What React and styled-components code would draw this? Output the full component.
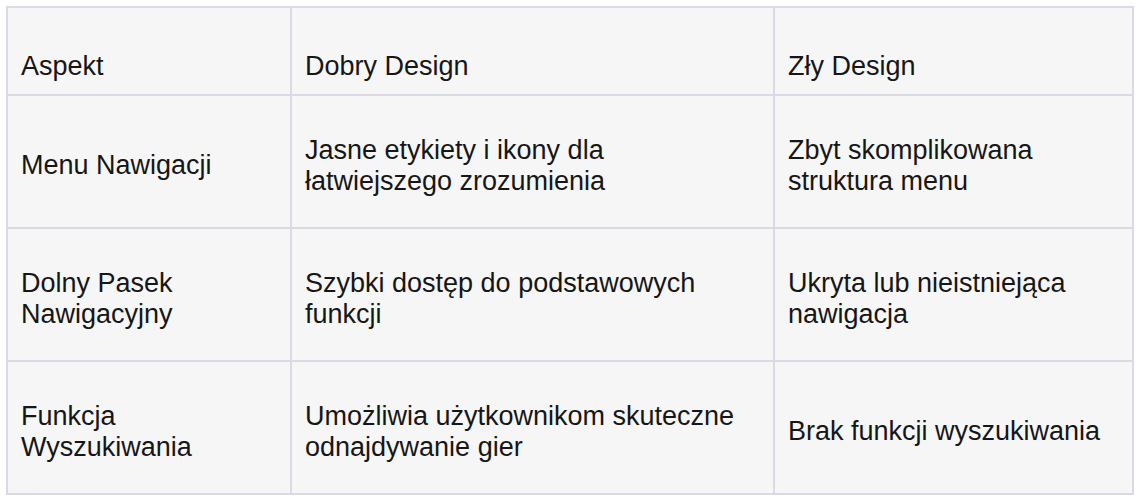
import React from "react";
import styled, { createGlobalStyle } from "styled-components";

const Global = createGlobalStyle`
  html, body { margin: 0; padding: 0; background: #ffffff; }
  body { font-family: "Liberation Sans", Arial, sans-serif; color: #161616; }
`;

const Page = styled.div`
  padding: 6px 0 0 6px;
`;

const Table = styled.table`
  width: 1128px;
  table-layout: fixed;
  border-collapse: separate;
  border-spacing: 0;
  border: 1px solid #dbd9e4;
  background: #f6f6f6;
  font-size: 27px;
  line-height: normal;
`;

const HeadRow = styled.tr`
  height: 88px;
`;

const BodyRow = styled.tr`
  height: 133px;
`;

const Th = styled.th`
  border: 1px solid #dbd9e4;
  padding: 12px 24px 12px 13px;
  text-align: left;
  font-weight: 400;
  vertical-align: bottom;
`;

const Td = styled.td`
  border: 1px solid #dbd9e4;
  padding: 16px 24px 8px 13px;
  text-align: left;
  vertical-align: middle;
`;

const rows = [
  ["Menu Nawigacji", "Jasne etykiety i ikony dla łatwiejszego zrozumienia", "Zbyt skomplikowana struktura menu"],
  ["Dolny Pasek Nawigacyjny", "Szybki dostęp do podstawowych funkcji", "Ukryta lub nieistniejąca nawigacja"],
  ["Funkcja Wyszukiwania", "Umożliwia użytkownikom skuteczne odnajdywanie gier", "Brak funkcji wyszukiwania"],
];

export default function App() {
  return (
    <>
      <Global />
      <Page>
        <Table>
          <colgroup>
            <col style={{ width: 284 }} />
            <col style={{ width: 483 }} />
            <col style={{ width: 359 }} />
          </colgroup>
          <thead>
            <HeadRow>
              <Th>Aspekt</Th>
              <Th>Dobry Design</Th>
              <Th>Zły Design</Th>
            </HeadRow>
          </thead>
          <tbody>
            {rows.map((r, i) => (
              <BodyRow key={i}>
                {r.map((c, j) => (
                  <Td key={j}>{c}</Td>
                ))}
              </BodyRow>
            ))}
          </tbody>
        </Table>
      </Page>
    </>
  );
}
